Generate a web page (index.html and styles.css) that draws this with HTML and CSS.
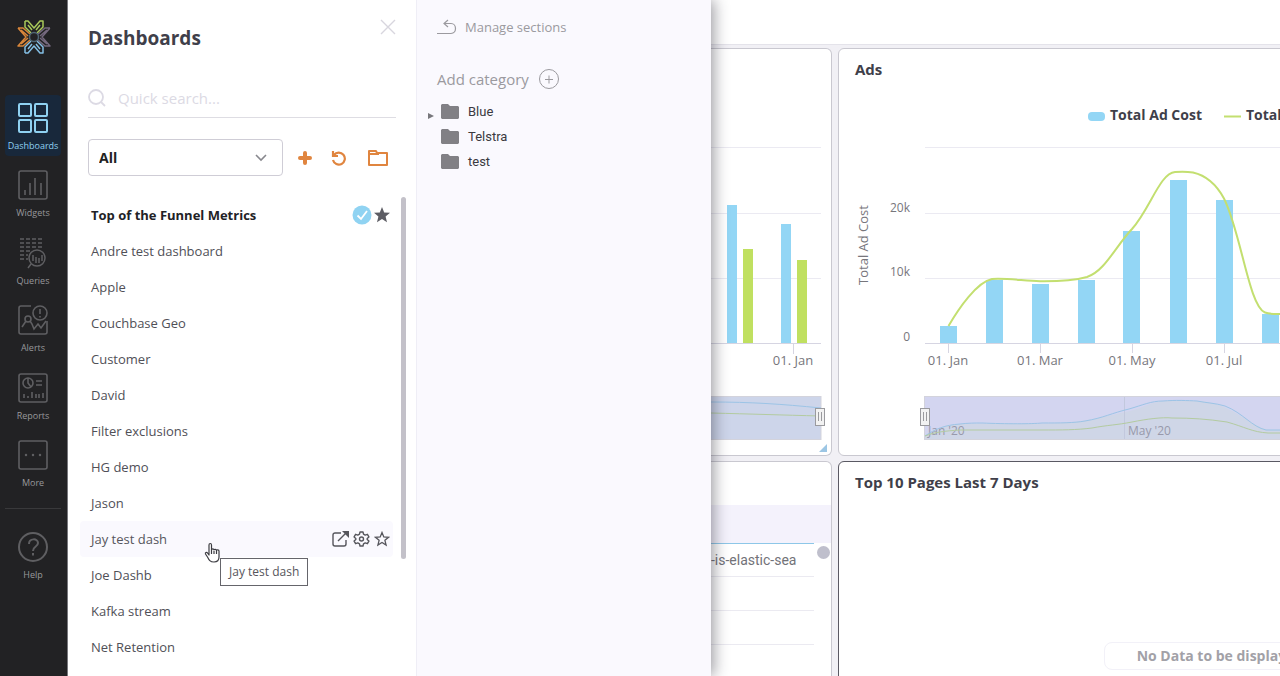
FILE: index.html
```html
<!DOCTYPE html>
<html lang="en">
<head>
<meta charset="utf-8">
<title>Dashboards</title>
<link rel="stylesheet" href="styles.css">
</head>
<body class="app">
<nav class="sidebar" aria-label="Main">
  <a class="logo" href="#" aria-label="Home">
    <svg width="36" height="36" viewBox="0 0 36 36" fill="none" stroke-width="1.5" stroke-linejoin="round">
      <path stroke="#a9c95a" d="M9 2h3l6 7 6-7h3v6l-6 6M9 2v6l6 6M12 6l4 5M24 6l-4 5"/>
      <path stroke="#84bfe4" d="M9 34h3l6-7 6 7h3v-6l-6-6M9 34v-6l6-6M12 30l4-5M24 30l-4-5"/>
      <path stroke="#d9863a" d="M2 9h5l7 6M2 9l8 9-8 9h5l7-6M5 11l7 6M5 25l7-6"/>
      <path stroke="#75697e" d="M34 9h-5l-7 6M34 9l-8 9 8 9h-5l-7-6M31 11l-7 6M31 25l-7-6"/>
      <circle cx="18" cy="18" r="4.500" fill="#222224" stroke="#4f6675"/>
    </svg>
  </a>
  <div class="nav-items">
    <a class="nav-item active" href="#">
      <svg width="32" height="32" viewBox="0 0 32 32" fill="none" stroke="currentColor" stroke-width="2"><rect x="2" y="2" width="12" height="12" rx="1"/><rect x="18" y="2" width="12" height="12" rx="1"/><rect x="2" y="18" width="12" height="12" rx="1"/><rect x="18" y="18" width="12" height="12" rx="1"/></svg>
      <span>Dashboards</span>
    </a>
    <a class="nav-item" href="#">
      <svg width="32" height="32" viewBox="0 0 32 32" fill="none" stroke="currentColor" stroke-width="1.6"><rect x="2" y="2" width="28" height="28" rx="2"/><path d="M8 21v5M13 14v12M18 9v17M24 14v12"/></svg>
      <span>Widgets</span>
    </a>
    <a class="nav-item" href="#">
      <svg width="32" height="32" viewBox="0 0 32 32" fill="none" stroke="currentColor" stroke-width="1.5"><path stroke-dasharray="4 2" d="M3 2h23M3 6h23M3 10h23M3 14h11M3 18h8M3 22h8"/><circle cx="20" cy="21" r="8"/><path d="M14 27l-3 4M16 18v6M19 20v6M22 21v5M25 18v6"/></svg>
      <span>Queries</span>
    </a>
    <a class="nav-item" href="#">
      <svg width="32" height="32" viewBox="0 0 32 32" fill="none" stroke="currentColor" stroke-width="1.6"><path d="M14 2H4a2 2 0 0 0-2 2v24a2 2 0 0 0 2 2h24a2 2 0 0 0 2-2V17"/><circle cx="23" cy="9" r="7"/><path d="M23 5v5M23 12v1.500M5 23l4-6M13 17l2 3 2 5 4-5 3 4 5-7"/><circle cx="11" cy="15" r="3"/></svg>
      <span>Alerts</span>
    </a>
    <a class="nav-item" href="#">
      <svg width="32" height="32" viewBox="0 0 32 32" fill="none" stroke="currentColor" stroke-width="1.6"><rect x="2" y="2" width="28" height="28" rx="2"/><circle cx="11" cy="11" r="5"/><path d="M11 6v5l3 4M19 9h6M19 13h6M7 22v4M11 24v2M15 20v6M19 22v4M22 22v4M26 21v5"/></svg>
      <span>Reports</span>
    </a>
    <a class="nav-item" href="#">
      <svg width="32" height="32" viewBox="0 0 32 32" fill="none" stroke="currentColor" stroke-width="1.6"><rect x="2" y="2" width="28" height="28" rx="2"/><path stroke-width="2.500" stroke-linecap="round" d="M9 16h0M16 16h0M23 16h0"/></svg>
      <span>More</span>
    </a>
  </div>
  <a class="nav-item help" href="#">
    <svg width="32" height="32" viewBox="0 0 32 32" fill="none" stroke="currentColor" stroke-width="2"><circle cx="16" cy="16" r="14"/><path d="M12 13c0-6 9-6 9-1 0 4-5 3-5 8M16 22v2.500"/></svg>
    <span>Help</span>
  </a>
</nav>

<section class="drawer">
  <header class="drawer-head">
    <h1>Dashboards</h1>
    <button class="icon-btn close" aria-label="Close"><svg width="16" height="16" viewBox="0 0 16 16" stroke="currentColor" stroke-width="1.400"><path d="M1 1l14 14M15 1L1 15"/></svg></button>
  </header>
  <label class="search">
    <svg width="18" height="18" viewBox="0 0 18 18" fill="none" stroke="currentColor" stroke-width="1.800"><circle cx="8" cy="8" r="7"/><path d="M13 13l4 4"/></svg>
    <input type="text" placeholder="Quick search..." aria-label="Quick search">
  </label>
  <div class="tools">
    <span class="select-wrap">
      <select aria-label="Dashboard filter"><option>All</option></select>
      <svg class="chevron" width="12" height="8" viewBox="0 0 12 8" fill="none" stroke="currentColor" stroke-width="1.600"><path d="M1 1l5 5 5-5"/></svg>
    </span>
    <button class="icon-btn tool" aria-label="Add dashboard"><svg width="14" height="14" viewBox="0 0 14 14" stroke="currentColor" stroke-width="4" stroke-linecap="round"><path d="M2 7h10M7 2v10"/></svg></button>
    <button class="icon-btn tool" aria-label="Reset"><svg width="16" height="16" viewBox="0 0 16 16" fill="none" stroke="currentColor" stroke-width="2.200"><path d="M2 1v5h5M3 5a6 6 0 1 1-1 5"/></svg></button>
    <button class="icon-btn tool" aria-label="Folders"><svg width="22" height="18" viewBox="0 0 22 18" fill="none" stroke="currentColor" stroke-width="2" stroke-linejoin="round"><path d="M2 16V2h7l1 2h10v12zM2 5h10"/></svg></button>
  </div>
  <div class="list-area">
    <ul class="list">
      <li class="row current"><a href="#">Top of the Funnel Metrics</a>
        <svg width="20" height="20" viewBox="0 0 20 20" fill="none"><circle cx="10" cy="10" r="9.500" fill="#90d3f2"/><path stroke="#fff" stroke-width="1.800" d="M5.500 10.500l3.500 3.500 6-8"/></svg>
        <svg width="16" height="16" viewBox="0 0 16 16" fill="#5d5d64"><path d="M8 0l2.200 5.400 5.800.4-4.400 3.700 1.400 5.700L8 12.100l-5 3.100 1.400-5.700L0 5.800l5.800-.4z"/></svg></li>
      <li class="row"><a href="#">Andre test dashboard</a></li>
      <li class="row"><a href="#">Apple</a></li>
      <li class="row"><a href="#">Couchbase Geo</a></li>
      <li class="row"><a href="#">Customer</a></li>
      <li class="row"><a href="#">David</a></li>
      <li class="row"><a href="#">Filter exclusions</a></li>
      <li class="row"><a href="#">HG demo</a></li>
      <li class="row"><a href="#">Jason</a></li>
      <li class="row hovered"><a href="#">Jay test dash</a>
        <button class="icon-btn" aria-label="Open"><svg width="17" height="16" viewBox="0 0 17 16" fill="none" stroke="currentColor" stroke-width="1.400"><path d="M9 2H3a2 2 0 0 0-2 2v9a2 2 0 0 0 2 2h9a2 2 0 0 0 2-2V9M6 10l8-8"/><path fill="currentColor" stroke="none" d="M10 0h7v7z"/></svg></button>
        <button class="icon-btn" aria-label="Settings"><svg width="17" height="16" viewBox="0 0 17 16" fill="none" stroke="currentColor" stroke-width="1.400" stroke-linejoin="round"><path d="M7 1h3l.5 2.200 1.700.9 2.200-.8 1.500 2.600-1.700 1.500v1.200l1.700 1.500-1.500 2.600-2.200-.8-1.700.9L10 15H7l-.5-2.200-1.700-.9-2.200.8-1.500-2.600 1.700-1.500V7.400L1.100 5.900l1.500-2.600 2.200.8 1.700-.9z"/><circle cx="8.500" cy="8" r="2"/></svg></button>
        <button class="icon-btn" aria-label="Favourite"><svg width="16" height="16" viewBox="0 0 16 16" fill="none" stroke="currentColor" stroke-width="1.300"><path d="M8 1.500l1.800 4.400 4.700.4-3.600 3 1.200 4.700L8 11.500 3.900 14l1.200-4.700-3.600-3 4.700-.4z"/></svg></button>
        <svg class="cursor" width="18" height="22" viewBox="0 0 18 22" fill="#fff" stroke="#3c3c42" stroke-width="1.200" stroke-linejoin="round"><path d="M5 13V3c0-2 2.500-2 2.500 0v5c0-1.500 2.500-1.500 2.500 0 0-1 2.500-1 2.500.5 0-1 2.500-1 2.500.5v6c0 3-2 5-5 5-4 0-5-2-6.500-5L1.500 12c-.5-1.500 1-2 2-1zM7.500 8v4M10 9v3M12.500 9v3"/></svg>
        <span class="tooltip" role="tooltip">Jay test dash</span></li>
      <li class="row"><a href="#">Joe Dashb</a></li>
      <li class="row"><a href="#">Kafka stream</a></li>
      <li class="row"><a href="#">Net Retention</a></li>
    </ul>
    <div class="scroll-thumb"></div>
  </div>
</section>

<section class="sections">
  <button class="manage"><svg width="20" height="16" viewBox="0 0 20 16" fill="none" stroke="currentColor" stroke-width="1.200"><path d="M11 1L7 4.500l4 3.500M7 4.500h7c6 0 6 10 0 10H0"/></svg>Manage sections</button>
  <button class="add-category">Add category<svg width="22" height="22" viewBox="0 0 22 22" fill="none" stroke="currentColor"><circle cx="11" cy="11" r="9.500"/><path d="M7 11.500h8M11 7.500v8"/></svg></button>
  <ul class="tree">
    <li><svg class="expander" width="6" height="8" viewBox="0 0 6 8"><path fill="#77777c" d="M0 1l6 3-6 3z"/></svg><svg class="folder" width="18" height="15" viewBox="0 0 18 15"><path fill="#818085" d="M1 0h6l2 2h8l1 1v11l-1 1H1l-1-1V1z"/></svg>Blue</li>
    <li><span class="expander"></span><svg class="folder" width="18" height="15" viewBox="0 0 18 15"><path fill="#818085" d="M1 0h6l2 2h8l1 1v11l-1 1H1l-1-1V1z"/></svg>Telstra</li>
    <li><span class="expander"></span><svg class="folder" width="18" height="15" viewBox="0 0 18 15"><path fill="#818085" d="M1 0h6l2 2h8l1 1v11l-1 1H1l-1-1V1z"/></svg>test</li>
  </ul>
</section>

<main class="main">
  <div class="topbar"></div>
  <div class="grid">
    <article class="widget left">
      <h2></h2>
      <svg class="chart" role="img" aria-label="Monthly bar chart">
        <path class="gridline" d="M0 55.500h110M0 121.500h110M0 186.500h110"/>
        <path class="axis" d="M0 251.500h110M82.500 251v11"/>
        <g class="bar"><rect x="16" y="113" width="10" height="138"/><rect x="70" y="132" width="10" height="119"/></g>
        <g class="bar-green"><rect x="32" y="157" width="10" height="94"/><rect x="86" y="168" width="10" height="83"/></g>
        <text class="tick" x="82" y="273" text-anchor="middle">01. Jan</text>
        <rect class="navigator blue" x="-1" y="304.500" width="111" height="43"/>
        <path class="nav-blue" d="M0 310c40 0 70 2 110 6"/>
        <path class="nav-green" d="M0 321c40 1 70 2 110 3"/>
        <rect class="handle" x="104.500" y="316.500" width="9" height="17"/><path class="grip" d="M107.500 320v9M110.500 320v9"/>
        <path fill="#9cc6e4" d="M108 360l8-8v8z"/>
      </svg>
    </article>
    <article class="widget">
      <h2>Ads</h2>
      <svg class="chart" role="img" aria-label="Total Ad Cost by month">
        <rect class="bar" x="249" y="20" width="17" height="9" rx="4"/>
        <text class="legend" x="271" y="28">Total Ad Cost</text>
        <path class="curve" d="M385 24.500h17"/>
        <text class="legend" x="407" y="28">Total</text>
        <path class="gridline" d="M86 55.500h660M86 121.500h660M86 186.500h660"/>
        <path class="axis" d="M86 251.500h660M109.500 251v10M201.500 251v10M293.500 251v10M385.500 251v10"/>
        <g class="bar"><rect x="101" y="234" width="17" height="17"/><rect x="147" y="188" width="17" height="63"/><rect x="193" y="192" width="17" height="59"/><rect x="239" y="188" width="17" height="63"/><rect x="284" y="139" width="17" height="112"/><rect x="331" y="88" width="17" height="163"/><rect x="377" y="108" width="17" height="143"/><rect x="423" y="222" width="17" height="29"/></g>
        <path class="curve" d="M109.500 234C120 216 138 190 153 187c17-1 32 2 48 2.300 16 .2 32-.3 47-4.300 18-6 28-30 45-48 18-20 28-56 43-57 6-.5 12-.5 18 .5 13 3 24 13 31 26 17 34 25 108 41 114 5 2 10 1.500 18 1.500"/>
        <text class="axis-title" x="29" y="153" text-anchor="middle" transform="rotate(-90 29 153)">Total Ad Cost</text>
        <g class="tick small" text-anchor="end"><text x="71" y="120">20k</text><text x="71" y="184">10k</text><text x="71" y="249">0</text></g>
        <g class="tick" text-anchor="middle"><text x="109" y="273">01. Jan</text><text x="201" y="273">01. Mar</text><text x="293" y="273">01. May</text><text x="385" y="273">01. Jul</text></g>
        <rect class="navigator" x="85.500" y="304.500" width="662" height="43"/>
        <path class="nav-fill" d="M86 344c10-7 20-12 35-12 15-1 30 0 75 0 45-1 50-3 95-13 16-4 20-9 35-10h30c35 0 55 26 75 29h300v9H86z"/>
        <path class="gridline dark" d="M285.500 305v42"/>
        <g class="tick nav-label"><text x="89" y="343">Jan '20</text><text x="289" y="343">May '20</text></g>
        <path class="nav-blue" d="M86 344c10-7 20-11 35-12 8-1 15-1 22-1 24 1 50 1 60 0 18 0 32 0 43-2 18-3 27-8 44-12 14-4 22-8 34-8 12-1 25-.5 34 0 10 2 18 2 28 5 18 7 27 21 41 24h300"/>
        <path class="nav-green" d="M86 344c10-4 20-5 35-6h80c23 0 36 0 52-2 16-3 25-3 40-6 15-3 30-5 40-4 20 0 35 1 55 4 18 5 25 10 41 11h300"/>
        <rect class="handle" x="81.500" y="316.500" width="9" height="17"/><path class="grip" d="M84.500 320v9M87.500 320v9"/>
      </svg>
    </article>
    <article class="widget left">
      <h2></h2>
      <table class="pages">
        <thead><tr><th scope="col"></th></tr></thead>
        <tbody><tr><td>-is-elastic-sea</td></tr><tr><td></td></tr><tr><td></td></tr></tbody>
      </table>
      <span class="dot"></span>
    </article>
    <article class="widget selected">
      <h2>Top 10 Pages Last 7 Days</h2>
      <div class="empty"><p>No Data to be displayed</p></div>
    </article>
  </div>
</main>
</body>
</html>
```
FILE: styles.css
```css
* { box-sizing: border-box; }

.app {
  margin: 0;
  display: flex;
  height: 100vh;
  overflow: hidden;
  background: #f1f0f5;
  color: #505057;
  font: 13px/20px "Open Sans", "Noto Sans", sans-serif;
}

a { color: inherit; text-decoration: none; }
ul { list-style: none; margin: 0; padding: 0; }
button { border: 0; background: none; padding: 0; font: inherit; color: inherit; cursor: pointer; }
svg { display: block; flex: none; }
.icon-btn { display: flex; align-items: center; justify-content: center; }

/* Sidebar */
.sidebar { flex: none; width: 68px; background: #222224; border-right: 1px solid #77777c; color: #5f5f62; }
.logo { display: flex; justify-content: center; padding-top: 19px; height: 95px; }
.nav-items { display: flex; flex-direction: column; justify-content: space-between; height: 398px; }
.nav-item { display: flex; flex-direction: column; align-items: center; gap: 4px; height: 61px; margin: 0 6px 0 5px; padding-top: 7px; border-radius: 4px; font-size: 9px; line-height: 16px; }
.nav-item span { color: #98989b; }
.nav-item.active { background: #18283b; color: #8fd1f1; }
.nav-item.active span { color: #8fd1f1; }
.help { margin-top: 15px; border-top: 1px solid #39393b; border-radius: 0; height: 84px; padding-top: 22px; }

/* Dashboard drawer */
.drawer { flex: none; width: 349px; padding: 18px 20px 0; background: #fff; border-right: 1px solid #efeef6; display: flex; flex-direction: column; }
.drawer-head { display: flex; justify-content: space-between; height: 64px; }
h1 { margin: 0; font-size: 19px; line-height: 40px; font-weight: 700; color: #3f3f4a; }
.close { height: 18px; color: #d8d6de; }
.search { display: flex; align-items: center; gap: 12px; height: 36px; padding-bottom: 3px; border-bottom: 1px solid #dedde3; color: #dcdae4; }
.search input { flex: 1; min-width: 0; border: 0; outline: 0; padding: 0; background: none; font: 15px/24px "Open Sans", "Noto Sans", sans-serif; color: #505057; }
.search input::placeholder { color: #dcdae4; opacity: 1; }
.tools { display: flex; align-items: center; margin-top: 21px; gap: 10px; }
.select-wrap { position: relative; width: 195px; }
select { appearance: none; width: 100%; height: 37px; padding: 0 10px; border: 1px solid #cfcdd6; border-radius: 4px; background: #fff; font: 700 14px/20px "Open Sans", "Noto Sans", sans-serif; color: #222; }
.chevron { position: absolute; right: 16px; top: 15px; color: #88888e; pointer-events: none; }
.tool { width: 24px; height: 24px; color: #e0853f; }
.tool:last-child { margin-left: 5px; }
.list-area { display: flex; gap: 8px; margin: 21px -10px 0 -8px; flex: 1; min-height: 0; }
.list { width: 313px; }
.row { position: relative; display: flex; align-items: center; gap: 4px; height: 36px; padding: 0 3px 0 11px; }
.row a { flex: 1; }
.row.current { gap: 2px; }
.row.current a { font-weight: 700; color: #222226; }
.row.hovered { background: #faf9fe; border-radius: 4px; color: #56565c; }
.scroll-thumb { width: 5px; height: 362px; border-radius: 3px; background: #c3c1c9; }
.cursor { position: absolute; left: 124px; top: 21px; }
.tooltip { position: absolute; left: 140px; top: 37px; z-index: 1; padding: 3px 8px; border: 1px solid #65656b; background: #fff; font-size: 12px; white-space: nowrap; }

/* Sections panel */
.sections { position: relative; z-index: 1; flex: none; width: 294px; padding: 15px 20px; background: #faf9fe; box-shadow: 3px 0 14px rgba(40, 38, 50, .45); clip-path: inset(0 -24px 0 0); color: #9b9a9f; }
.manage { display: flex; align-items: center; gap: 8px; height: 24px; }
.add-category { display: flex; align-items: center; gap: 9px; height: 24px; margin-top: 28px; font-size: 15px; }
.tree { margin-top: 8px; margin-left: -9px; font: 13px/25px Roboto, "Open Sans", sans-serif; color: #3a3a3f; }
.tree li { display: flex; align-items: center; }
.expander { width: 6px; margin-right: 7px; margin-top: 8px; }
.folder { margin-right: 9px; }

/* Dashboard area */
.main { flex: 1; min-width: 0; overflow: hidden; }
.topbar { height: 45px; background: #fff; border-bottom: 1px solid #e4e3ea; }
.grid { display: grid; grid-template-columns: 121px minmax(774px, 1fr); gap: 5px 6px; padding-top: 3px; }
.widget { position: relative; min-height: 408px; background: #fff; border: 1px solid #c9c8d0; border-radius: 6px; overflow: hidden; }
.widget.left { border-left: 0; border-radius: 0 6px 6px 0; }
.widget.selected { border-color: #5a5963; }
h2 { margin: 0; height: 43px; padding: 10px 16px 0; font-size: 15px; line-height: 20px; font-weight: 700; color: #3f3f4a; }
.chart { width: 100%; height: 363px; }
.gridline { stroke: #ebeaf2; }
.gridline.dark { stroke: #c2c8dd; }
.axis { stroke: #d6d5e2; }
.bar { fill: #93d6f5; }
.bar-green { fill: #c0e060; }
.curve { fill: none; stroke: #c3df70; stroke-width: 2; }
.tick, .axis-title { fill: #77767c; font-size: 13px; }
.tick.small { font-size: 12px; }
.legend { fill: #3f3f4a; font-size: 14px; font-weight: 700; }
.navigator { fill: #d3d5f0; stroke: #d3d3dc; }
.navigator.blue { fill: #cdd5ea; }
.nav-fill { fill: #cfd6e7; }
.tick.nav-label { font-size: 12px; fill: #9899ab; }
.nav-blue { fill: none; stroke: #9cc4e6; }
.nav-green { fill: none; stroke: #b3cba0; }
.handle { fill: #f2f2f2; stroke: #9a9a9e; }
.grip { stroke: #9a9a9e; }
.pages { width: 100%; border-spacing: 0; font-family: Roboto, sans-serif; font-size: 14px; color: #727278; }
.pages th { height: 38px; padding: 0; background: #f4f2fc; }
.pages td { height: 34px; padding: 0; background: linear-gradient(#ebeaf1, #ebeaf1) left bottom / 103px 1px no-repeat; }
.pages tbody tr:first-child td { background: linear-gradient(#8dc7e8, #8dc7e8) left top / 103px 1px no-repeat, linear-gradient(#ebeaf1, #ebeaf1) left bottom / 103px 1px no-repeat; }
.dot { position: absolute; right: 1px; top: 84px; width: 13px; height: 13px; border-radius: 50%; background: #bfbfcc; }
.empty { display: flex; justify-content: center; padding-top: 137px; }
.empty p { margin: 0; padding: 3px 32px; border: 1px solid #f2f1f8; border-radius: 8px; font-size: 14px; font-weight: 700; color: #a2a1a7; }
.empty { padding-right: 10px; }
```
